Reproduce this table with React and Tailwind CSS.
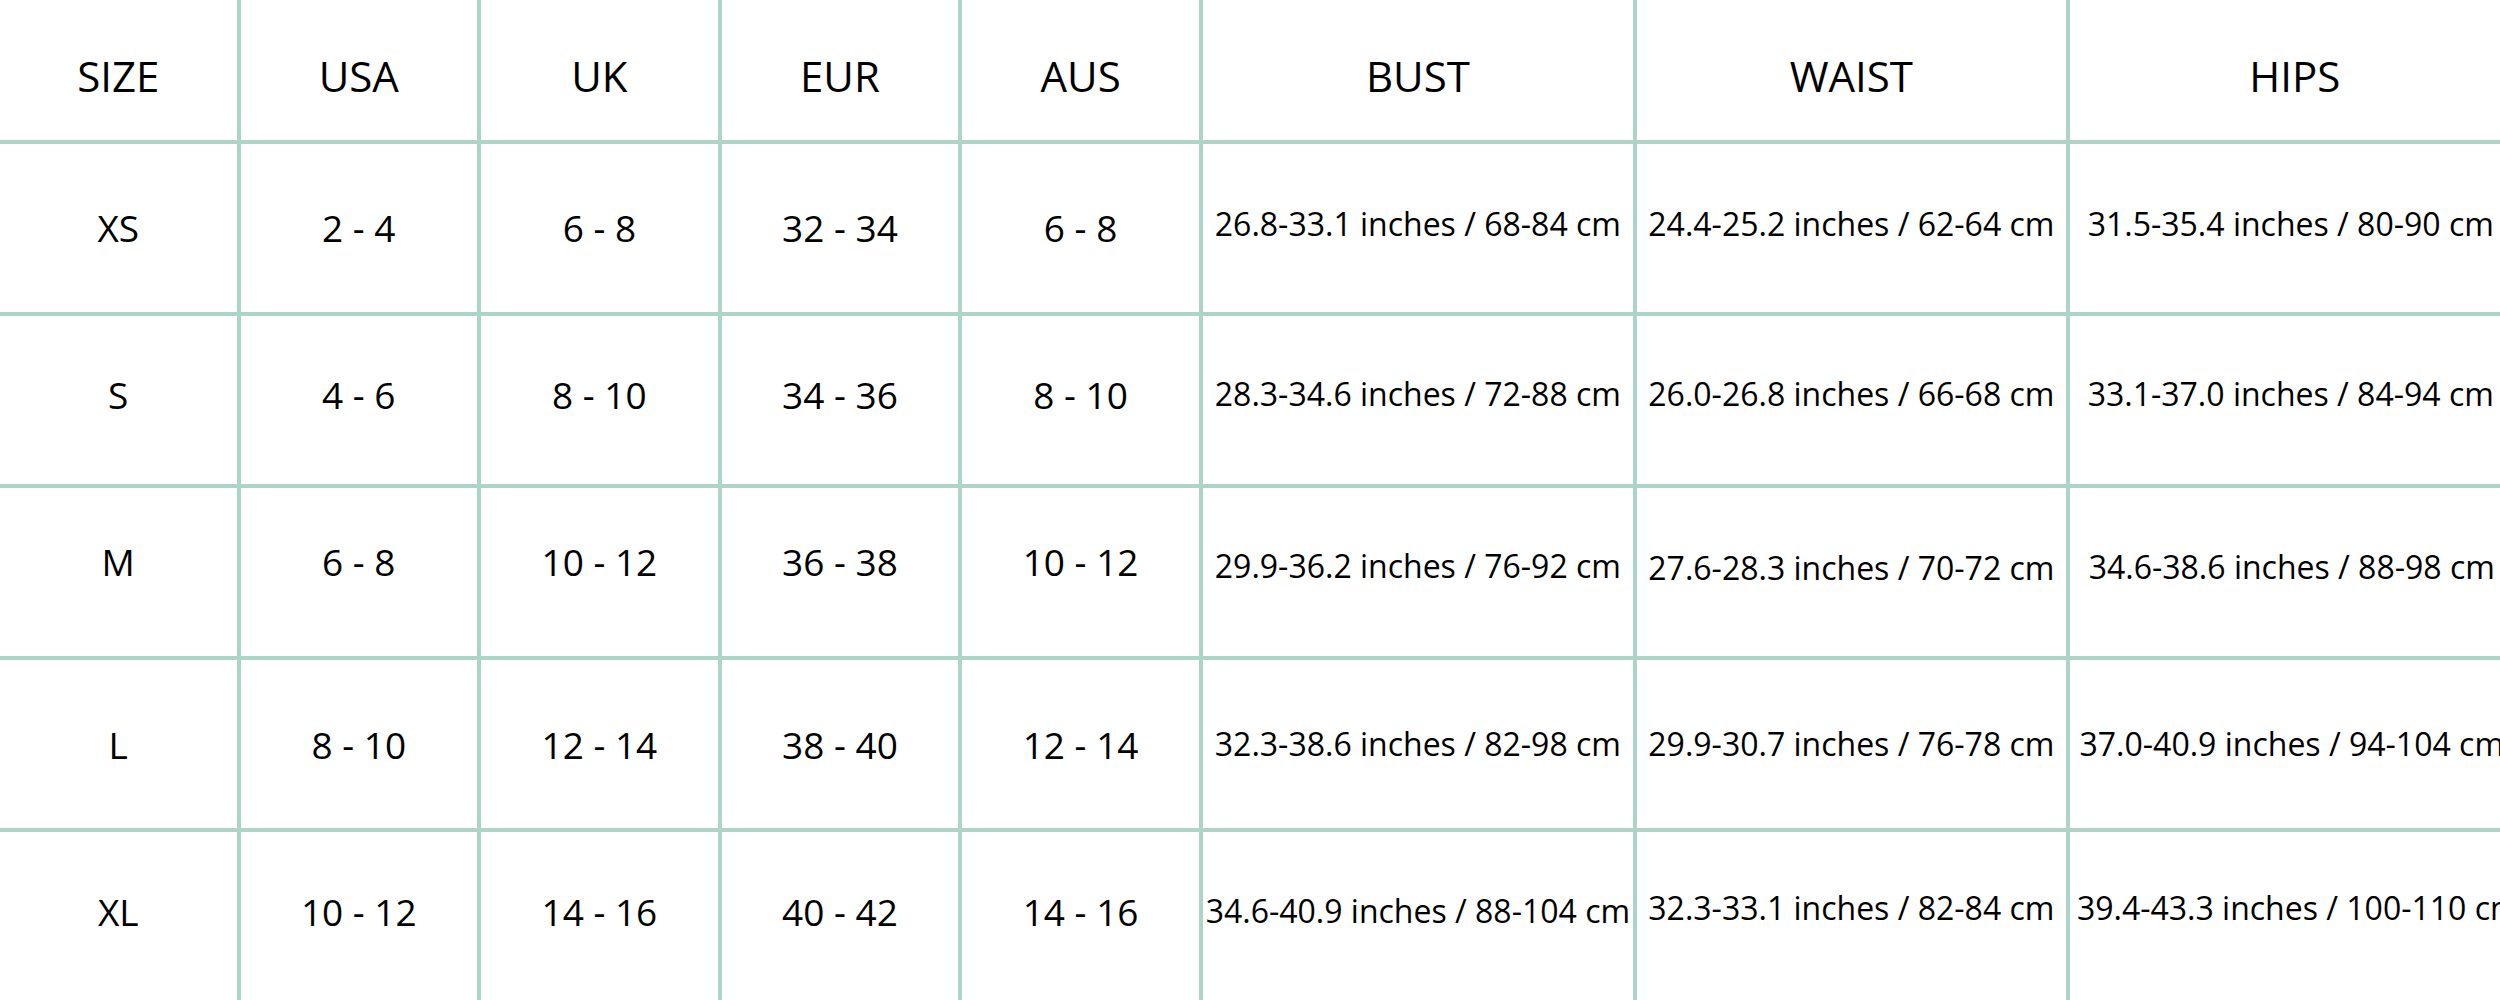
const headers = ['SIZE', 'USA', 'UK', 'EUR', 'AUS', 'BUST', 'WAIST', 'HIPS'];

const rows = [
    ['XS', '2 - 4', '6 - 8', '32 - 34', '6 - 8', '26.8-33.1 inches / 68-84 cm', '24.4-25.2 inches / 62-64 cm', '31.5-35.4 inches / 80-90 cm'],
    ['S', '4 - 6', '8 - 10', '34 - 36', '8 - 10', '28.3-34.6 inches / 72-88 cm', '26.0-26.8 inches / 66-68 cm', '33.1-37.0 inches / 84-94 cm'],
    ['M', '6 - 8', '10 - 12', '36 - 38', '10 - 12', '29.9-36.2 inches / 76-92 cm', '27.6-28.3 inches / 70-72 cm', '34.6-38.6 inches / 88-98 cm'],
    ['L', '8 - 10', '12 - 14', '38 - 40', '12 - 14', '32.3-38.6 inches / 82-98 cm', '29.9-30.7 inches / 76-78 cm', '37.0-40.9 inches / 94-104 cm'],
    ['XL', '10 - 12', '14 - 16', '40 - 42', '14 - 16', '34.6-40.9 inches / 88-104 cm', '32.3-33.1 inches / 82-84 cm', '39.4-43.3 inches / 100-110 cm'],
];

// the source chart isn't perfectly centred, so each row nudges its text a little
const sizePad = ['', 'pb-[10px]', 'pb-[20px]', 'pt-[2px]', 'pb-[8px]'];
const measPad = [
    ['pb-[8px]', 'pb-[8px]', 'pb-[9px] pr-[8px]'],
    ['pb-[12px]', 'pb-[12px]', 'pb-[12px] pr-[8px]'],
    ['pb-[12px]', 'pb-[9px]', 'pb-[10px] pr-[6px]'],
    ['', '', 'pr-[6px]'],
    ['pb-[10px]', 'pb-[16px]', 'pb-[16px] justify-start pl-[7px]'],
];

export default function App() {
    return (
        <div className="w-[2500px] h-[1000px] overflow-hidden bg-white font-['Open_Sans',sans-serif] text-black">
            <div className="grid grid-cols-[236.5px_236.6px_236.6px_236.6px_236.6px_430px_429px_1fr] grid-rows-[140px_repeat(5,168px)] gap-[4px] bg-[#acd4c7] h-[1000px]">
                {headers.map((h) => (
                    <div key={h} className="bg-white flex items-center justify-center pt-[10px] text-[42px] whitespace-nowrap">
                        {h}
                    </div>
                ))}
                {rows.map((row, r) =>
                    row.map((cell, i) => (
                        <div
                            key={row[0] + i}
                            className={
                                i < 5
                                    ? 'bg-white flex items-center justify-center text-[37px] whitespace-nowrap ' + sizePad[r]
                                    : 'bg-white flex items-center justify-center text-[32px] whitespace-nowrap ' + measPad[r][i - 5]
                            }
                        >
                            {cell}
                        </div>
                    ))
                )}
            </div>
        </div>
    );
}
